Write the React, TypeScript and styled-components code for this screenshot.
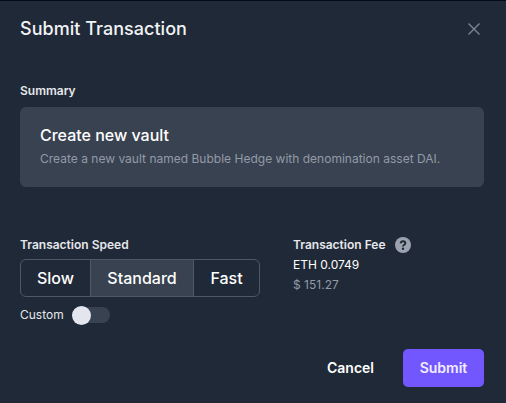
import React, { useState } from "react";
import styled, { createGlobalStyle } from "styled-components";

const GlobalStyle = createGlobalStyle`
  *, *::before, *::after { box-sizing: border-box; }
  body { margin: 0; background: #202937; }
  button { font: inherit; border: 0; padding: 0; background: none; cursor: pointer; }
  h1, h2, p { margin: 0; }
`;

const Dialog = styled.main`
  display: flex;
  flex-direction: column;
  width: 506px;
  height: 403px;
  padding: 0 22px 0 20px;
  overflow: hidden;
  border-top: 1px solid #050a18;
  background: #202937;
  color: #fff;
  font-family: Inter, sans-serif;
  font-size: 13px;
  line-height: 20px;
`;

const Header = styled.header`
  display: flex;
  align-items: center;
  justify-content: space-between;
  height: 56px;
`;

const Title = styled.h1`
  color: #f1f3f6;
  font-size: 18px;
  font-weight: 500;
  line-height: 28px;
  letter-spacing: 0.03px;
`;

const CloseButton = styled.button`
  display: flex;
  width: 20px;
  height: 20px;
  color: #7d8592;
`;

const Label = styled.h2`
  font-size: 12px;
  font-weight: 600;
  line-height: 20px;
  color: #e5e7eb;
`;

const Summary = styled.section`
  margin-top: 24px;
`;

const Card = styled.div`
  display: flex;
  flex-direction: column;
  gap: 2px;
  height: 80px;
  margin-top: 6px;
  padding: 16px 20px;
  border-radius: 6px;
  background: #394250;
`;

const CardTitle = styled.p`
  font-size: 16px;
  font-weight: 500;
  line-height: 24px;
`;

const Muted = styled.p`
  font-size: 12px;
  line-height: 20px;
  letter-spacing: 0.01px;
  color: #929aa8;
`;

const Options = styled.div`
  display: grid;
  grid-template-columns: 273px 1fr;
  margin-top: 48px;
`;

const SpeedGroup = styled.div`
  display: flex;
  width: 240px;
  height: 38px;
  margin-top: 4px;
  border: 1px solid #4f5866;
  border-radius: 6px;
  overflow: hidden;
`;

const SpeedOption = styled.button<{ $selected: boolean; $width: number }>`
  width: ${(p) => p.$width}px;
  background: ${(p) => (p.$selected ? "#394250" : "transparent")};
  color: #fff;
  font-size: 16px;
  font-weight: 500;

  & + & { border-left: 1px solid #4f5866; }
`;

const CustomRow = styled.div`
  display: flex;
  align-items: center;
  gap: 8px;
  height: 20px;
  margin-top: 8px;
  font-size: 12px;
  color: #e5e7eb;
`;

const Switch = styled.button<{ $on: boolean }>`
  display: flex;
  align-items: center;
  justify-content: ${(p) => (p.$on ? "flex-end" : "flex-start")};
  width: 38px;
  height: 16px;
  border-radius: 8px;
  background: #394250;
`;

const Knob = styled.span`
  flex: none;
  width: 19px;
  height: 19px;
  border-radius: 50%;
  background: #e4e6ef;
`;

const FeeLabel = styled.div`
  display: flex;
  align-items: center;
  gap: 9px;
`;

const Amount = styled.p`
  font-size: 12px;
  line-height: 20px;
`;

const Footer = styled.footer`
  display: flex;
  justify-content: flex-end;
  margin-top: 24px;
`;

const Action = styled.button<{ $primary?: boolean }>`
  width: ${(p) => (p.$primary ? 81 : 105)}px;
  height: 38px;
  border-radius: 5px;
  background: ${(p) => (p.$primary ? "#7257ff" : "transparent")};
  color: ${(p) => (p.$primary ? "#f1edff" : "#fff")};
  font-size: 14px;
  font-weight: 600;
`;

const speeds = [
  { name: "Slow", width: 69 },
  { name: "Standard", width: 103 },
  { name: "Fast", width: 66 },
];

export default function App() {
  const [speed, setSpeed] = useState("Standard");
  const [custom, setCustom] = useState(false);
  return (
    <>
      <GlobalStyle />
      <Dialog>
        <Header>
          <Title>Submit Transaction</Title>
          <CloseButton aria-label="Close">
            <svg width="20" height="20" viewBox="0 0 20 20" fill="none" stroke="currentColor" strokeWidth="1.4">
              <path d="M4.5 4.5 15.5 15.5M15.5 4.5 4.5 15.5" />
            </svg>
          </CloseButton>
        </Header>
        <Summary>
          <Label>Summary</Label>
          <Card>
            <CardTitle>Create new vault</CardTitle>
            <Muted>Create a new vault named Bubble Hedge with denomination asset DAI.</Muted>
          </Card>
        </Summary>
        <Options>
          <section>
            <Label>Transaction Speed</Label>
            <SpeedGroup>
              {speeds.map((s) => (
                <SpeedOption key={s.name} $width={s.width} $selected={speed === s.name} onClick={() => setSpeed(s.name)}>
                  {s.name}
                </SpeedOption>
              ))}
            </SpeedGroup>
            <CustomRow>
              Custom
              <Switch role="switch" aria-label="Custom" aria-checked={custom} $on={custom} onClick={() => setCustom(!custom)}>
                <Knob />
              </Switch>
            </CustomRow>
          </section>
          <section>
            <FeeLabel>
              <Label>Transaction Fee</Label>
              <svg width="16" height="16" viewBox="0 0 16 16" fill="none">
                <circle cx="8" cy="8" r="8" fill="#9ca3af" />
                <path d="M5.6 6.3C5.8 4.8 6.8 4.2 8 4.2s2.4.7 2.4 2c0 1.7-2.4 1.5-2.4 3.3" stroke="#202937" strokeWidth="1.9" />
                <circle cx="8" cy="11.8" r="1.2" fill="#202937" />
              </svg>
            </FeeLabel>
            <Amount>ETH 0.0749</Amount>
            <Muted>$ 151.27</Muted>
          </section>
        </Options>
        <Footer>
          <Action>Cancel</Action>
          <Action $primary>Submit</Action>
        </Footer>
      </Dialog>
    </>
  );
}
